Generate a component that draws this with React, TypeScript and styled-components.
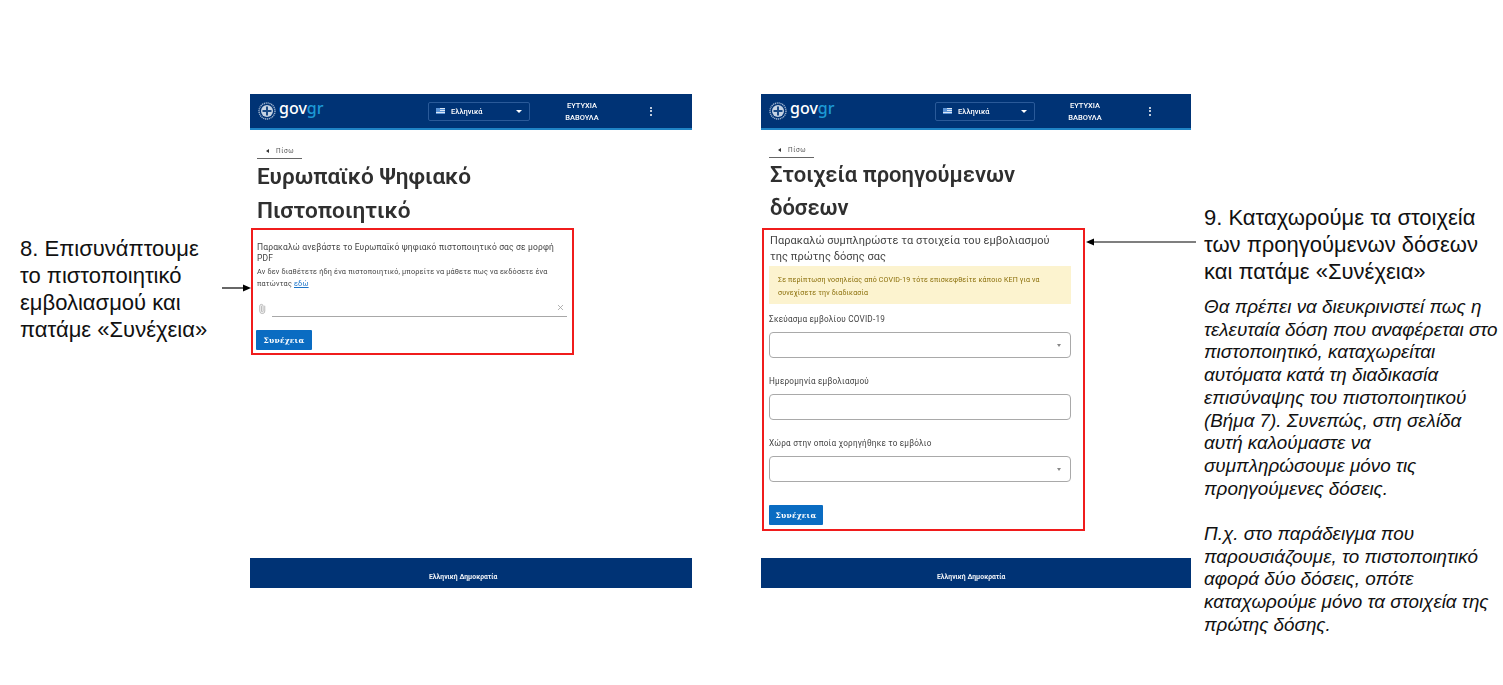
import { createGlobalStyle, styled } from "styled-components";
import { Paperclip, X } from "lucide-react";

const GlobalStyle = createGlobalStyle`
  html, body {
    margin: 0;
    padding: 0;
    background: #fff;
  }
  body {
    width: 1503px;
    height: 685px;
    overflow: hidden;
    font-family: "Liberation Sans", Arial, sans-serif;
  }
`;

const Slide = styled.div`
  position: relative;
  display: flex;
  align-items: flex-start;
  width: 1503px;
  height: 685px;
  box-sizing: border-box;
  padding: 94px 0 0 20px;
`;

const LeftCaption = styled.div`
  width: 230px;
  flex-shrink: 0;
  margin-top: 141px;
  font-size: 22px;
  line-height: 27px;
  color: #111;
`;

const RightColumn = styled.div`
  width: 299px;
  flex-shrink: 0;
  margin-left: 13px;
  margin-top: 110px;
  color: #111;
`;

const StepTitle = styled.div`
  font-size: 22px;
  line-height: 27px;
`;

const Note = styled.div`
  margin-top: 11px;
  font-size: 18.85px;
  line-height: 22.7px;
  font-style: italic;
`;

const Screen = styled.section<{ $width: number; $gap?: number }>`
  width: ${(p) => p.$width}px;
  height: 494px;
  flex-shrink: 0;
  margin-left: ${(p) => p.$gap ?? 0}px;
  display: flex;
  flex-direction: column;
  font-family: Roboto, "Noto Sans", sans-serif;
  filter: blur(0.5px);
`;

const Header = styled.header`
  height: 34px;
  flex-shrink: 0;
  display: flex;
  align-items: center;
  background: #003375;
  border-bottom: 2px solid #1f84c6;
  color: #fff;
`;

const Brand = styled.div<{ $width: number }>`
  width: ${(p) => p.$width}px;
  flex-shrink: 0;
  display: flex;
  align-items: center;
  gap: 3px;
  padding-left: 8px;
  box-sizing: border-box;
`;

const Wordmark = styled.span`
  font-family: "Noto Sans", Roboto, sans-serif;
  font-size: 16px;
  font-weight: 500;
  line-height: 16px;
  margin-top: -7px;

  b {
    font-weight: 500;
    color: #1d9ad6;
  }
`;

const LangSelect = styled.div<{ $width: number }>`
  width: ${(p) => p.$width}px;
  height: 19px;
  flex-shrink: 0;
  box-sizing: border-box;
  display: flex;
  align-items: center;
  gap: 6px;
  padding: 0 7px;
  border: 1px solid #2a5a99;
  border-radius: 2px;
  font-size: 7.5px;
  font-weight: 500;
`;

const LangText = styled.span`
  flex: 1;
`;

const WhiteCaret = styled.span`
  width: 0;
  height: 0;
  border-left: 3px solid transparent;
  border-right: 3px solid transparent;
  border-top: 3px solid #fff;
`;

const UserName = styled.div<{ $width: number }>`
  width: ${(p) => p.$width}px;
  flex-shrink: 0;
  margin-top: 2px;
  text-align: center;
  font-size: 7.5px;
  font-weight: 500;
  line-height: 12px;
`;

const Kebab = styled.span<{ $left: number }>`
  display: flex;
  flex-direction: column;
  gap: 1.5px;
  margin-left: ${(p) => p.$left}px;

  i {
    width: 2px;
    height: 2px;
    background: #fff;
    border-radius: 50%;
  }
`;

const Back = styled.div<{ $left: number; $top: number }>`
  width: 45px;
  height: 15px;
  margin: ${(p) => p.$top}px 0 0 ${(p) => p.$left}px;
  border-bottom: 1px solid #666;
  display: flex;
  align-items: center;
  gap: 7px;
  font-size: 6.5px;
  letter-spacing: 0.6px;
  color: #555;
`;

const BackCaret = styled.span`
  margin-left: 9px;
  width: 0;
  height: 0;
  border-top: 2px solid transparent;
  border-bottom: 2px solid transparent;
  border-right: 3px solid #333;
`;

const Title = styled.h1<{ $left: number; $size: number; $line: number; $before: number; $after: number }>`
  margin: ${(p) => p.$before}px 0 ${(p) => p.$after}px ${(p) => p.$left}px;
  font-size: ${(p) => p.$size}px;
  font-weight: 600;
  line-height: ${(p) => p.$line}px;
  color: #2f2f2f;
`;

const RedBox = styled.div<{ $width: number; $height: number; $left: number; $right: number }>`
  width: ${(p) => p.$width}px;
  height: ${(p) => p.$height}px;
  margin-left: 1px;
  box-sizing: border-box;
  padding: 0 ${(p) => p.$right}px 0 ${(p) => p.$left}px;
  border: 2px solid #f01c1c;
`;

const Lead = styled.p`
  margin: 12px 0 0;
  font-size: 8.5px;
  line-height: 11px;
  letter-spacing: 0.15px;
  color: #444;
`;

const Hint = styled.p`
  margin: 2px 0 0;
  font-size: 7.3px;
  line-height: 12px;
  letter-spacing: 0.17px;
  color: #444;

  a {
    color: #1a73c8;
    text-decoration: underline;
  }
`;

const FileRow = styled.div`
  margin-top: 9px;
  display: flex;
  align-items: flex-start;
  gap: 5px;
  color: #b0b0b0;

  > svg {
    margin-top: 5px;
    transform: rotate(-45deg);
  }
`;

const FileField = styled.div`
  flex: 1;
  height: 17px;
  display: flex;
  align-items: center;
  justify-content: flex-end;
  padding-right: 2px;
  border-bottom: 1.5px solid #a8a8a8;
  color: #9a9a9a;
`;

const SubmitButton = styled.button<{ $top: number; $width: number; $left?: number }>`
  display: block;
  width: ${(p) => p.$width}px;
  height: 20px;
  margin-top: ${(p) => p.$top}px;
  margin-left: ${(p) => p.$left ?? 0}px;
  padding: 0;
  border: none;
  border-radius: 1px;
  background: #0a6cc2;
  color: #fff;
  font-family: "DejaVu Serif", serif;
  font-size: 7.5px;
  font-weight: 700;
  letter-spacing: 0.2px;
`;

const FormHeading = styled.p`
  margin: 3px 0 0 1px;
  font-size: 11px;
  line-height: 16px;
  letter-spacing: 0.05px;
  color: #444;
`;

const Alert = styled.div`
  margin-top: 1px;
  height: 38px;
  box-sizing: border-box;
  padding: 7px 9px;
  background: #fcf3cf;
  font-size: 7.1px;
  line-height: 13px;
  letter-spacing: 0.15px;
  color: #8b6f0a;
`;

const FieldLabel = styled.div<{ $top: number }>`
  margin-top: ${(p) => p.$top}px;
  font-size: 8.2px;
  line-height: 10px;
  letter-spacing: 0.2px;
  color: #444;
`;

const Control = styled.div`
  height: 26px;
  margin-top: 8px;
  box-sizing: border-box;
  display: flex;
  align-items: center;
  justify-content: flex-end;
  padding-right: 9px;
  border: 1.5px solid #a9a9a9;
  border-radius: 4px;
  background: #fff;
`;

const GrayCaret = styled.span`
  width: 0;
  height: 0;
  border-left: 2px solid transparent;
  border-right: 2px solid transparent;
  border-top: 3px solid #888;
`;

const Footer = styled.footer`
  margin-top: auto;
  height: 30px;
  box-sizing: border-box;
  padding-top: 14px;
  background: #003375;
  color: #eef2f7;
  font-size: 6.8px;
  font-weight: 700;
  line-height: 10px;
`;

const FooterText = styled.div<{ $left: number }>`
  margin-left: ${(p) => p.$left}px;
`;

const Arrow = styled.svg<{ $x: number; $y: number; $w: number }>`
  position: absolute;
  left: ${(p) => p.$x}px;
  top: ${(p) => p.$y}px;
  width: ${(p) => p.$w}px;
  height: 10px;
`;

function Emblem() {
  return (
    <svg width={18} height={18} viewBox="0 0 18 18" aria-hidden="true">
      <circle cx={9} cy={9} r={8} fill="none" stroke="#9fb4cf" strokeWidth={1.4} strokeDasharray="1.2 0.7" />
      <circle cx={9} cy={9} r={6} fill="#c6d3e3" />
      <rect x={8} y={4.5} width={2} height={9} fill="#1a4a85" />
      <rect x={4.5} y={8} width={9} height={2} fill="#1a4a85" />
    </svg>
  );
}

function Flag() {
  return (
    <svg width={9} height={6} viewBox="0 0 9 6" aria-hidden="true">
      <rect width={9} height={6} fill="#dbe7f5" />
      <rect y={1} width={9} height={1} fill="#5b93d6" />
      <rect y={3} width={9} height={1} fill="#5b93d6" />
      <rect y={5} width={9} height={1} fill="#5b93d6" />
      <rect width={4} height={3} fill="#5b93d6" />
    </svg>
  );
}

function TopBar({ brand, lang, name, kebab }: { brand: number; lang: number; name: number; kebab: number }) {
  return (
    <Header>
      <Brand $width={brand}>
        <Emblem />
        <Wordmark>
          gov<b>gr</b>
        </Wordmark>
      </Brand>
      <LangSelect $width={lang}>
        <Flag />
        <LangText>Ελληνικά</LangText>
        <WhiteCaret />
      </LangSelect>
      <UserName $width={name}>
        ΕΥΤΥΧΙΑ
        <br />
        ΒΑΒΟΥΛΑ
      </UserName>
      <Kebab $left={kebab}>
        <i />
        <i />
        <i />
      </Kebab>
    </Header>
  );
}

export default function App() {
  return (
    <Slide>
      <GlobalStyle />
      <LeftCaption>
        8. Επισυνάπτουμε
        <br />
        το πιστοποιητικό
        <br />
        εμβολιασμού και
        <br />
        πατάμε «Συνέχεια»
      </LeftCaption>

      <Screen $width={442}>
        <TopBar brand={178} lang={102} name={104} kebab={16} />
        <Back $left={7} $top={13}>
          <BackCaret />
          Πίσω
        </Back>
        <Title $left={7} $size={22.6} $line={34} $before={1} $after={0}>
          Ευρωπαϊκό Ψηφιακό
          <br />
          Πιστοποιητικό
        </Title>
        <RedBox $width={323} $height={127} $left={4} $right={5}>
          <Lead>
            Παρακαλώ ανεβάστε το Ευρωπαϊκό ψηφιακό πιστοποιητικό σας σε μορφή
            <br />
            PDF
          </Lead>
          <Hint>
            Αν δεν διαθέτετε ήδη ένα πιστοποιητικό, μπορείτε να μάθετε πως να εκδόσετε ένα
            <br />
            πατώντας <a href="#here">εδώ</a>
          </Hint>
          <FileRow>
            <Paperclip size={10} />
            <FileField>
              <X size={9} />
            </FileField>
          </FileRow>
          <SubmitButton $top={13} $width={56} $left={-1}>
            Συνέχεια
          </SubmitButton>
        </RedBox>
        <Footer>
          <FooterText $left={179}>Ελληνική Δημοκρατία</FooterText>
        </Footer>
      </Screen>

      <Screen $width={430} $gap={69}>
        <TopBar brand={174} lang={100} name={100} kebab={14} />
        <Back $left={8} $top={12}>
          <BackCaret />
          Πίσω
        </Back>
        <Title $left={9} $size={22} $line={33} $before={0} $after={4}>
          Στοιχεία προηγούμενων
          <br />
          δόσεων
        </Title>
        <RedBox $width={323} $height={303} $left={5} $right={12}>
          <FormHeading>
            Παρακαλώ συμπληρώστε τα στοιχεία του εμβολιασμού
            <br />
            της πρώτης δόσης σας
          </FormHeading>
          <Alert>
            Σε περίπτωση νοσηλείας από COVID-19 τότε επισκεφθείτε κάποιο ΚΕΠ για να
            <br />
            συνεχίσετε την διαδικασία
          </Alert>
          <FieldLabel $top={10}>Σκεύασμα εμβολίου COVID-19</FieldLabel>
          <Control>
            <GrayCaret />
          </Control>
          <FieldLabel $top={18}>Ημερομηνία εμβολιασμού</FieldLabel>
          <Control />
          <FieldLabel $top={18}>Χώρα στην οποία χορηγήθηκε το εμβόλιο</FieldLabel>
          <Control>
            <GrayCaret />
          </Control>
          <SubmitButton $top={23} $width={54}>
            Συνέχεια
          </SubmitButton>
        </RedBox>
        <Footer>
          <FooterText $left={176}>Ελληνική Δημοκρατία</FooterText>
        </Footer>
      </Screen>

      <RightColumn>
        <StepTitle>
          9. Καταχωρούμε τα στοιχεία
          <br />
          των προηγούμενων δόσεων
          <br />
          και πατάμε «Συνέχεια»
        </StepTitle>
        <Note>
          Θα πρέπει να διευκρινιστεί πως η
          <br />
          τελευταία δόση που αναφέρεται στο
          <br />
          πιστοποιητικό, καταχωρείται
          <br />
          αυτόματα κατά τη διαδικασία
          <br />
          επισύναψης του πιστοποιητικού
          <br />
          (Βήμα 7). Συνεπώς, στη σελίδα
          <br />
          αυτή καλούμαστε να
          <br />
          συμπληρώσουμε μόνο τις
          <br />
          προηγούμενες δόσεις.
          <br />
          <br />
          Π.χ. στο παράδειγμα που
          <br />
          παρουσιάζουμε, το πιστοποιητικό
          <br />
          αφορά δύο δόσεις, οπότε
          <br />
          καταχωρούμε μόνο τα στοιχεία της
          <br />
          πρώτης δόσης.
        </Note>
      </RightColumn>

      <Arrow $x={222} $y={283} $w={29} viewBox="0 0 29 10" aria-hidden="true">
        <path d="M0 5H22" stroke="#000" strokeWidth={1.2} />
        <path d="M29 5L21 1.5V8.5Z" fill="#000" />
      </Arrow>
      <Arrow $x={1086} $y={237} $w={110} viewBox="0 0 110 10" aria-hidden="true">
        <path d="M8 5H110" stroke="#000" strokeWidth={1.2} />
        <path d="M0 5L8 1.5V8.5Z" fill="#000" />
      </Arrow>
    </Slide>
  );
}
